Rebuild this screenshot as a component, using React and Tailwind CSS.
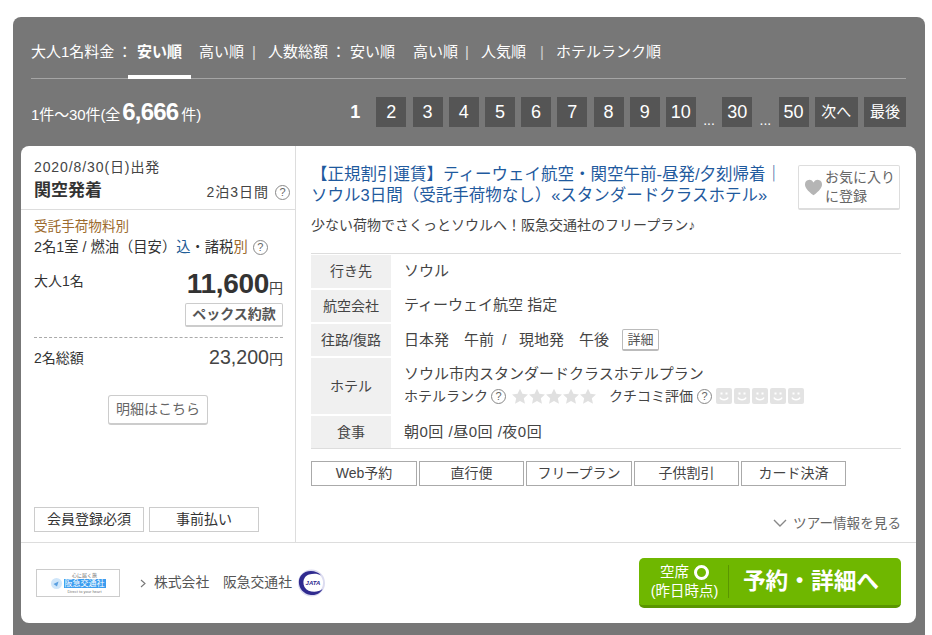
const F = { fontFamily: '"Liberation Sans","Noto Sans CJK JP",sans-serif' };

function Q({ className = "" }) {
  return (
    <span className={"inline-flex w-[15px] h-[15px] tracking-normal rounded-full border border-[#888] text-[#666] text-[11px] leading-none items-center justify-center shrink-0 " + className}>?</span>
  );
}

function Star() {
  return (
    <svg width="18" height="17" viewBox="0 0 24 24" className="-mx-[0.5px]">
      <path d="M12 1l3.400 7.200 7.800.9-5.800 5.300 1.600 7.800L12 18.300 5 22.200l1.600-7.800L.8 9.100l7.800-.9z" fill="#e0e0e0" />
    </svg>
  );
}

function Face() {
  return (
    <svg width="16" height="16" viewBox="0 0 16 16">
      <rect width="16" height="16" rx="2" fill="#e3e3e3" />
      <rect x="4.500" y="4.500" width="2" height="2" fill="#fff" />
      <rect x="9.500" y="4.500" width="2" height="2" fill="#fff" />
      <path d="M4 9.500c1 3 7 3 8 0" stroke="#fff" strokeWidth="1.400" fill="none" />
    </svg>
  );
}

function PageBtn({ children, w = "w-[30px]", small }) {
  return (
    <a className={`${w} h-[30px] bg-[#555] text-white flex items-center justify-center ${small ? "text-[15px]" : "text-[18px]"}`}>{children}</a>
  );
}

function Row({ label, h, children }) {
  return (
    <div className={`flex ${h} mb-[2px]`}>
      <div className="w-[80px] shrink-0 bg-[#f0f0f0] flex items-center justify-center text-[14px] text-[#444]">{label}</div>
      <div className="pl-[13px] flex-1 flex flex-col justify-center text-[15px] text-[#444]">{children}</div>
    </div>
  );
}

function Tag({ children, w }) {
  return <div className={`${w} h-[25px] border border-[#aaa] flex items-center justify-center text-[14px] text-[#444]`}>{children}</div>;
}

export default function App() {
  return (
    <div className="h-[635px] w-[932px] bg-white pt-[17px] pl-[13px] overflow-hidden" style={F}>
      <div className="w-[912px] h-[618px] bg-[#777] rounded-t-[8px] pl-[8px]">
        <div className="mr-[19px] ml-[10px] h-[62px] border-b border-[#a5a5a5] flex items-end text-[15px] text-white">
          <div className="flex h-[62px] items-center whitespace-nowrap">
            <span className="w-[97px] pt-[10px]">大人1名料金<span className="ml-[3px]">：</span></span>
            <span className="relative w-[63px] text-center font-bold h-full flex items-center justify-center pt-[10px]">
              安い順
              <span className="absolute left-0 right-0 -bottom-[1px] h-[4px] bg-white"></span>
            </span>
            <span className="ml-[8px] w-[45px] pt-[10px]">高い順</span>
            <span className="w-[24px] pl-[8px] text-[#ddd] pt-[10px]">|</span>
            <span className="w-[82px] pt-[10px]">人数総額<span className="ml-[3px]">：</span></span>
            <span className="w-[63px] pt-[10px]">安い順</span>
            <span className="w-[45px] pt-[10px]">高い順</span>
            <span className="w-[23px] pl-[7px] text-[#ddd] pt-[10px]">|</span>
            <span className="w-[45px] pt-[10px]">人気順</span>
            <span className="w-[30px] pl-[14px] text-[#ccc] pt-[10px]">|</span>
            <span className="pt-[10px]">ホテルランク順</span>
          </div>
        </div>
        <div className="mr-[19px] ml-[10px] h-[67px] flex items-center text-white justify-between pb-[1px]">
          <div className="flex items-baseline text-[15px] tracking-[-0.1px]">
            1件～30件(全
            <span className="text-[24px] font-bold mx-[2px] tracking-[-0.8px]">6,666</span>
            <span className="ml-[1px]">件)</span>
          </div>
          <div className="flex items-center gap-[6.2px]">
            <span className="w-[30px] h-[30px] flex items-center justify-center text-[18px] font-bold">1</span>
            {[2, 3, 4, 5, 6, 7, 8, 9, 10].map((n) => (
              <PageBtn key={n}>{n}</PageBtn>
            ))}
            <span className="w-[14px] text-center text-[14px] self-end leading-none pt-[4px]">...</span>
            <PageBtn>30</PageBtn>
            <span className="w-[14px] text-center text-[14px] self-end leading-none pt-[4px]">...</span>
            <PageBtn>50</PageBtn>
            <PageBtn w="w-[43px]" small>次へ</PageBtn>
            <PageBtn w="w-[42px]" small>最後</PageBtn>
          </div>
        </div>

        <div className="w-[895px] h-[477px] bg-white rounded-[8px] flex flex-col">
          <div className="flex h-[396px] border-b border-[#ddd] box-content">
            {/* left */}
            <div className="w-[275px] shrink-0 border-r border-[#ddd] flex flex-col">
              <div className="h-[64px] border-b border-[#ddd] pl-[13px] pr-[5px] pt-[11px]">
                <div className="text-[14px] leading-[20px] text-[#444] tracking-[0.9px] whitespace-nowrap">2020/8/30(日)出発</div>
                <div className="flex justify-between items-center h-[26px] mt-[1px]">
                  <span className="text-[17px] font-bold text-[#333]">関空発着</span>
                  <span className="text-[14px] text-[#444] flex items-center gap-[6px] pt-[2px] tracking-[1px]">2泊3日間<Q /></span>
                </div>
              </div>
              <div className="pl-[13px] pr-[12px] flex-1 flex flex-col pt-[7px]">
                <div className="text-[13.6px] leading-[20px] text-[#9c6a2c]">受託手荷物料別</div>
                <div className="text-[14.3px] leading-[21px] text-[#333] flex items-center whitespace-nowrap">
                  2名1室 / 燃油（目安）<span className="text-[#1e5c96]">込</span>・諸税<span className="text-[#9c6a2c]">別</span><Q className="ml-[5px]" />
                </div>
                <div className="flex justify-between items-start mt-[11px]">
                  <span className="text-[14px] leading-[22px] text-[#333] mt-[1px]">大人1名</span>
                  <span className="text-[#333] leading-[30px] font-bold text-[28px] tracking-[-0.3px]">
                    11,600<span className="text-[14px] font-normal text-[#444] tracking-normal">円</span>
                  </span>
                </div>
                <div className="flex justify-end">
                  <div className="w-[98px] h-[24px] border border-[#ccc] border-b-2 rounded-[2px] text-[14px] font-bold text-[#555] flex items-center justify-center whitespace-nowrap">ペックス約款</div>
                </div>
                <div className="border-t border-dashed border-[#aaa] mt-[10px]"></div>
                <div className="flex justify-between items-center mt-[7px] h-[26px]">
                  <span className="text-[14px] text-[#333]">2名総額</span>
                  <span className="text-[19.6px] text-[#444]">23,200<span className="text-[14px]">円</span></span>
                </div>
                <div className="flex justify-center mt-[24px] pr-[1px]">
                  <div className="w-[100px] h-[30px] border border-[#ccc] border-b-2 rounded-[3px] text-[14px] text-[#666] flex items-center justify-center">明細はこちら</div>
                </div>
                <div className="mt-auto mb-[10px] flex gap-[5px]">
                  <div className="w-[110px] h-[25px] border border-[#ccc] text-[14px] text-[#333] flex items-center justify-center">会員登録必須</div>
                  <div className="w-[110px] h-[25px] border border-[#ccc] text-[14px] text-[#333] flex items-center justify-center">事前払い</div>
                </div>
              </div>
            </div>
            {/* right */}
            <div className="flex-1 pl-[15px] pr-[15px] flex flex-col">
              <div className="flex justify-between mt-[18px] h-[50px]">
                <div className="text-[16.5px] leading-[21px] text-[#1f5a9e] whitespace-nowrap w-[480px]">
                  <div>【正規割引運賃】ティーウェイ航空・関空午前-昼発/夕刻帰着｜</div>
                  <div>ソウル3日間（受託手荷物なし）«スタンダードクラスホテル»</div>
                </div>
                <div className="w-[102px] h-[45px] mt-[1px] border border-[#ddd] border-b-2 rounded-[2px] flex items-center pl-[5px] mr-[1px]">
                  <svg width="19" height="17" viewBox="0 0 24 22" className="mr-[2px] shrink-0">
                    <path d="M12 21C4 15 1 11 1 7a5.800 5.800 0 0 1 11-2.600A5.800 5.800 0 0 1 23 7c0 4-3 8-11 14z" fill="#b5b5b5" />
                  </svg>
                  <span className="text-[14px] leading-[19px] text-[#666] whitespace-nowrap">お気に入り<br />に登録</span>
                </div>
              </div>
              <div className="text-[14px] leading-[20px] text-[#444] mt-[1px] whitespace-nowrap">少ない荷物でさくっとソウルへ！阪急交通社のフリープラン♪</div>
              <div className="mt-[18px] border-t border-[#ddd] pt-[1px]">
                <Row label="行き先" h="h-[33px]"><span>ソウル</span></Row>
                <Row label="航空会社" h="h-[32px]"><span className="-mt-[2px]">ティーウェイ航空 指定</span></Row>
                <Row label="往路/復路" h="h-[32px]">
                  <div className="flex items-center whitespace-pre">
                    日本発　午前&nbsp;&nbsp;/&nbsp;&nbsp;&nbsp;現地発　午後
                    <span className="ml-[13px] w-[37px] h-[22px] border border-[#bbb] border-b-2 rounded-[2px] text-[13px] text-[#555] flex items-center justify-center">詳細</span>
                  </div>
                </Row>
                <Row label="ホテル" h="h-[56px]">
                  <div className="leading-[22px] -mt-[2px]">ソウル市内スタンダードクラスホテルプラン</div>
                  <div className="flex items-center text-[14px] leading-[22px] whitespace-nowrap">
                    ホテルランク<Q className="ml-[3px] mr-[5px]" />
                    <span className="flex"><Star /><Star /><Star /><Star /><Star /></span>
                    <span className="ml-[13px]">クチコミ評価</span><Q className="ml-[4px] mr-[4px]" />
                    <span className="flex gap-[2px]"><Face /><Face /><Face /><Face /><Face /></span>
                  </div>
                </Row>
                <div className="flex h-[33px] border-b border-[#ddd]">
                  <div className="w-[80px] shrink-0 bg-[#f0f0f0] flex items-center justify-center text-[14px] text-[#444]">食事</div>
                  <div className="pl-[13px] flex items-center text-[15px] text-[#444] tracking-[0.5px]">朝0回 /昼0回 /夜0回</div>
                </div>
              </div>
              <div className="flex mt-[12px] gap-[2px]">
                <Tag w="w-[106px]">Web予約</Tag>
                <Tag w="w-[105px]">直行便</Tag>
                <Tag w="w-[106px]">フリープラン</Tag>
                <Tag w="w-[105px]">子供割引</Tag>
                <Tag w="w-[105px]">カード決済</Tag>
              </div>
              <div className="mt-auto mb-[8px] flex items-center justify-end text-[13.6px] text-[#666] gap-[6px]">
                <svg width="14" height="9" viewBox="0 0 14 9"><path d="M1 1l6 6 6-6" stroke="#888" strokeWidth="1.400" fill="none" /></svg>
                ツアー情報を見る
              </div>
            </div>
          </div>
          {/* footer */}
          <div className="flex-1 flex items-center pl-[15px] pr-[15px]">
            <div className="w-[84px] h-[28px] border border-[#ccc] flex items-center justify-center shrink-0">
              <svg width="11" height="11" viewBox="0 0 11 11" className="mr-[2px]"><circle cx="5.500" cy="5.500" r="5.500" fill="#cfe6fa" /><path d="M2.500 6l5-2.500-1.500 5z" fill="#5a9fe0" /></svg>
              <div className="flex flex-col items-center leading-none">
                <span className="text-[5px] text-[#666] leading-[7px]">心に届く旅</span>
                <span className="bg-[#3b9df0] text-white text-[8px] leading-[9px] px-[1px]">阪急交通社</span>
                <span className="text-[4px] text-[#777] leading-[7px] whitespace-nowrap">Direct to your heart</span>
              </div>
            </div>
            <span className="ml-[20px] mr-[8px] text-[#666]">
              <svg width="6" height="9" viewBox="0 0 6 9"><path d="M1 1l4 3.500L1 8" stroke="#777" strokeWidth="1.100" fill="none" /></svg>
            </span>
            <span className="text-[13.8px] text-[#555] whitespace-pre">株式会社　阪急交通社</span>
            <svg width="29" height="28" viewBox="0 0 29 28" className="ml-[5px]">
              <circle cx="14.500" cy="14" r="12.500" fill="none" stroke="#dcdcf0" strokeWidth="2" />
              <path d="M24 6.500C20 1 9 0 4 6.500-1 13 3 25 14 26c6 .5 10-2.500 11.500-6C21 24 11 24 7.500 18 5 13 7 7 12 5.500 17 4 21 4.500 24 6.500z" fill="#2f2a8f" />
              <text x="16" y="16" textAnchor="middle" fontSize="6" fontWeight="700" fill="#2f2a8f" fontStyle="italic">JATA</text>
            </svg>
            <div className="ml-auto w-[262px] h-[50px] rounded-[5px] bg-[#6fb700] border-b-[3px] border-[#5a9600] flex items-center text-white">
              <div className="w-[89px] pl-[2px] flex flex-col items-center text-[14.5px] leading-[19px] pt-[1px]">
                <div className="flex items-center gap-[5px]">空席<span className="w-[15px] h-[15px] rounded-full border-[3px] border-white"></span></div>
                <div className="whitespace-nowrap">(昨日時点)</div>
              </div>
              <div className="w-px h-[33px] bg-[#5a9600]"></div>
              <div className="flex-1 text-center text-[22.7px] font-bold whitespace-nowrap pr-[8px]">予約・詳細へ</div>
            </div>
          </div>
        </div>
      </div>
    </div>
  );
}
